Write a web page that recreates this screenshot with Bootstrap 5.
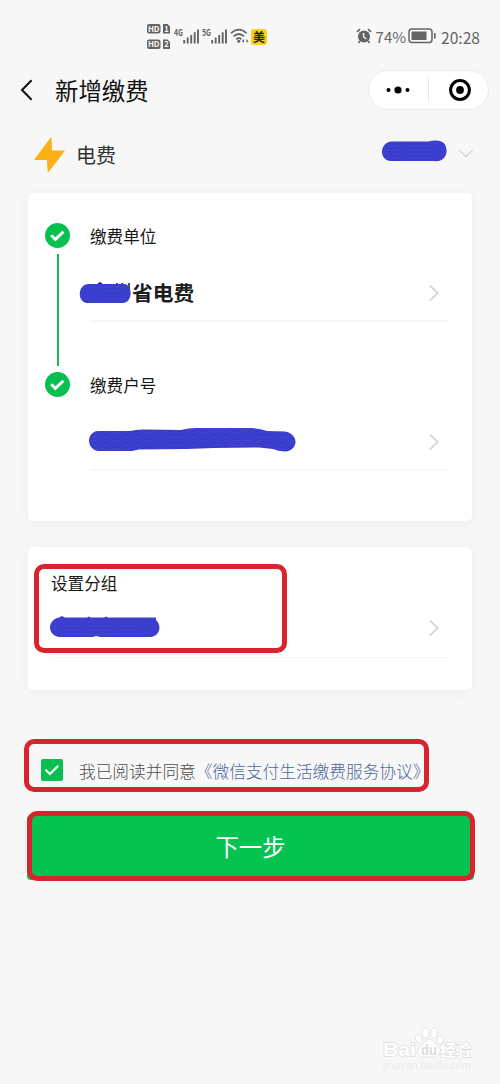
<!DOCTYPE html>
<html lang="zh-CN">
<head>
<meta charset="utf-8">
<meta name="viewport" content="width=device-width, initial-scale=1">
<title>新增缴费</title>
<link href="https://cdn.jsdelivr.net/npm/bootstrap@5.3.0/dist/css/bootstrap.min.css" rel="stylesheet">
<style>
body{background:#f7f7f7;font-family:"Noto Sans CJK SC",sans-serif;color:#111;width:500px;height:1084px;overflow:hidden}
svg{display:block;flex:none}
svg text{font-family:"Noto Sans CJK SC",sans-serif}
.status{height:60px;padding:12px 20px 0 147px;color:#646464}
.status .clock,.status .pct{font:400 15.6px/26px "Noto Sans CJK SC",sans-serif;color:#666}
.beauty{width:16px;height:16px;border-radius:3px;background:#fbd017;color:#222;font-size:12px;line-height:16px;font-weight:700;text-align:center}
.topbar{height:60px;padding:0 11px 0 20px}
.topbar h1{font-size:23.4px;line-height:34px;font-weight:400;color:#111}
.capsule{width:121px;height:40px;border:1px solid #ebebeb;border-radius:20px;background:#fff}
.capsule .bar{width:1px;height:24px;background:#e8e8e8}
.kind{height:73px;padding:0 26px 4px 34px}
.kind .name{font-size:20px;line-height:30px;color:#333}
.panel{margin:0 28px;background:#fff;border-radius:5px;box-shadow:0 2px 14px rgba(0,0,0,.045)}
.panel-steps{height:328px;padding:30px 24px 0 17px}
.step{height:149px;gap:20px}
.line{width:2px;height:112px;margin:6px 0;background:#21b25b}
.title{font-size:16.6px;line-height:25px;color:#181818}
.panel-steps .title{padding-top:1px;height:25px}
.value{height:58px;margin-top:16px;border-bottom:2px solid #f6f6f6;padding:2px 8px 0 0}
.value b{font-size:20.8px;line-height:30px;font-weight:700;color:#1c1c1c;padding-bottom:2px}
.panel-group{height:143px;margin-top:26px;padding:24px 24px 0 22px}
.panel-group .value{height:60px;margin-top:2px;border-bottom-width:1px;padding-top:0}
.markbox{position:absolute;border:5px solid #d8242f;border-radius:10px;pointer-events:none}
.agree{height:53px;margin:49px 71px 0 24px;border:5px solid #d8242f;border-radius:10px;padding:12px 0 0 12px;font-weight:300;white-space:nowrap}
.agree .txt{font-size:16.7px;line-height:24px;color:#4c4c4c}
.agree a.txt{color:#4c6a9c;text-decoration:none}
.next{height:65px;margin:23px 26px 0 27px;position:relative}
.next .btn{height:65px;border:0;border-radius:4px;background:#04c351;color:#fff;font-size:23.3px;line-height:34px;padding:0 0 3px}
.foot{margin-top:147px;padding-right:26px}
</style>
</head>
<body>
<svg width="0" height="0" class="position-absolute" aria-hidden="true">
  <defs>
    <pattern id="ink" width="11" height="4" patternUnits="userSpaceOnUse">
      <rect width="11" height="4" fill="#4145dc"/>
      <path d="M0 .8h7l4 .6M0 2.8l5 .4h6" stroke="#3032b4" stroke-width=".7" fill="none"/>
    </pattern>
    <symbol id="done" viewBox="0 0 25 25"><circle cx="12.5" cy="12.5" r="12.5" fill="#07c050"/><path d="M6.2 12.3l4.2 4.1 8-7.6" fill="none" stroke="#fff" stroke-width="2.9"/></symbol>
    <symbol id="next" viewBox="0 0 12 18"><path d="M1.8 1.5L9.8 9l-8 7.5" fill="none" stroke="#d6d6d6" stroke-width="1.800"/></symbol>
    <symbol id="bars" viewBox="0 0 16 15"><path d="M1.2 11v3.5M4.7 8.5v6M8.2 6v8.5M11.7 3.2v11.3M15 .5v14" stroke="#646464" stroke-width="1.9"/></symbol>
  </defs>
</svg>

<header class="status d-flex align-items-start">
  <svg width="24" height="27" viewBox="0 0 24 27" style="margin-top:11px">
    <g fill="#646464"><rect x="0" y="1" width="13.5" height="9.5" rx="2"/><rect x="0" y="16.5" width="13.5" height="9.5" rx="2"/><path d="M16 1h4.5l2.5 2.5v7h-7zM16 16.500h4.500l2.500 2.500v7h-7z"/></g>
    <g fill="#f7f7f7" font-size="8" font-weight="700"><text x="1" y="8.700" textLength="11.500">HD</text><text x="1" y="24.200" textLength="11.500">HD</text><text x="17.200" y="8.700" font-size="7.500">1</text><text x="17.200" y="24.200" font-size="7.500">2</text></g>
  </svg>
  <svg width="26" height="22" viewBox="0 0 26 22" style="margin:13px 0 0 3px"><text x="0" y="10.500" font-size="9" font-weight="700" fill="#646464" textLength="9" lengthAdjust="spacingAndGlyphs">4G</text><use href="#bars" x="9" y="4" width="16" height="15"/></svg>
  <svg width="26" height="22" viewBox="0 0 26 22" style="margin:13px 0 0 2px"><text x="0" y="10.500" font-size="9" font-weight="700" fill="#646464" textLength="9" lengthAdjust="spacingAndGlyphs">5G</text><use href="#bars" x="9" y="4" width="16" height="15"/></svg>
  <svg width="19" height="16" viewBox="0 0 19 16" style="margin:16px 0 0 2px"><g fill="none" stroke="#646464" stroke-width="1.800"><path d="M1 5.200Q8.800-2 16.600 5.200"/><path d="M3.600 8.300Q8.800 3.600 14 8.300"/><path d="M6.200 11.200Q8.800 9 11.400 11.200"/></g><circle cx="8.800" cy="13.300" r="1.500" fill="#646464"/><path d="M12 13l2-2v4zM18.500 13l-2-2v4z" fill="#646464"/></svg>
  <div class="beauty" style="margin:17px 0 0 2px">美</div>
  <svg width="16" height="16" viewBox="0 0 16 16" class="ms-auto" style="margin-top:16px"><circle cx="8" cy="8.500" r="6" fill="#646464"/><path d="M1 3.800L4 1.100M15 3.800L12 1.100M4 13l-1.500 2M12 13l1.500 2" stroke="#646464" stroke-width="1.700"/><path d="M7.600 5v4l2.800 2" stroke="#f7f7f7" stroke-width="1.400" fill="none"/></svg>
  <span class="pct" style="margin:12px 2px 0 4px;font-size:15px">74%</span>
  <svg width="28" height="16" viewBox="0 0 28 16" style="margin:16px 5px 0 0"><rect x="1" y="1" width="23" height="13.500" rx="3" fill="none" stroke="#646464" stroke-width="1.500"/><rect x="3.500" y="3.500" width="15" height="8.500" fill="#646464"/><path d="M26.800 5v5.500" stroke="#646464" stroke-width="1.700"/></svg>
  <span class="clock" style="margin-top:12px">20:28</span>
</header>

<nav class="topbar d-flex align-items-center">
  <svg width="13" height="22" viewBox="0 0 13 22"><path d="M11.600 1.300L2 11l9.600 9.700" fill="none" stroke="#111" stroke-width="2"/></svg>
  <h1 class="m-0" style="padding-left:22px">新增缴费</h1>
  <div class="capsule d-flex align-items-center ms-auto">
    <svg width="59" height="24" viewBox="0 0 59 24"><circle cx="19.500" cy="12" r="2"/><circle cx="29" cy="12" r="3.600"/><circle cx="38.500" cy="12" r="2"/></svg>
    <span class="bar"></span>
    <svg width="59" height="24" viewBox="0 0 59 24"><circle cx="31" cy="12" r="9.400" fill="none" stroke="#000" stroke-width="3"/><circle cx="31" cy="12" r="3.900"/></svg>
  </div>
</nav>

<div class="kind d-flex align-items-center">
  <svg width="31" height="36" viewBox="0 0 31 36"><path d="M17 .8L.8 22.500h12.700L14.200 35 30.200 14H17.500z" fill="#fbb116" stroke="#fbb116" stroke-linejoin="round"/></svg>
  <span class="name" style="padding:1px 0 0 11px">电费</span>
  <svg width="66" height="22" viewBox="0 0 66 22" class="ms-auto" style="margin-bottom:7px"><path d="M10 1.500H47Q60-1.500 64 4.500 68 13 62 19q-4 3-9 2H10C-2 21-2 3 10 1.500z" fill="url(#ink)"/></svg>
  <svg width="16" height="10" viewBox="0 0 16 10" style="margin-left:11px;margin-bottom:1px"><path d="M1.500 1.500L8 7.500l6.500-6" fill="none" stroke="#d4d4d4" stroke-width="1.500"/></svg>
</div>

<main>
  <section class="panel panel-steps">
    <div class="step d-flex">
      <div class="d-flex flex-column align-items-center"><svg width="25" height="25"><use href="#done"/></svg><span class="line"></span></div>
      <div class="flex-grow-1">
        <div class="title">缴费单位</div>
        <div class="value d-flex align-items-center">
          <svg width="53" height="24" viewBox="0 0 53 24" style="margin-left:-11px"><path d="M19 3l2-1 2 1M38 2v2M43 2v2M50 2v6" stroke="#333" stroke-width="1.700" fill="none"/><path d="M9 3H45C54 3 54 22 44 22H9C-2 22-2 4 9 3z" fill="url(#ink)"/></svg>
          <b>省电费</b>
          <svg width="12" height="18" class="ms-auto"><use href="#next"/></svg>
        </div>
      </div>
    </div>
    <div class="step d-flex">
      <div><svg width="25" height="25"><use href="#done"/></svg></div>
      <div class="flex-grow-1">
        <div class="title">缴费户号</div>
        <div class="value d-flex align-items-center">
          <svg width="208" height="26" viewBox="0 0 208 26" style="margin:0 0 4px -1px"><path d="M9 4H41Q48 2 57 2.500L92 3Q100 .8 108 1H163Q171 1.500 178 4L196 4.500C210 7 210 23 196 24.500Q189 24 184 22L170 20.500 125 21 98 22 50 22.500 43 24H9C-3 22-3 5 9 4z" fill="url(#ink)"/></svg>
          <svg width="12" height="18" class="ms-auto"><use href="#next"/></svg>
        </div>
      </div>
    </div>
  </section>

  <section class="panel panel-group position-relative">
    <div class="title" style="padding-left:1px">设置分组</div>
    <div class="value d-flex align-items-center">
      <svg width="110" height="22" viewBox="0 0 110 22" style="margin-bottom:2px"><path d="M9 1.500L12 0l3 1.500H37l2-1 2 1H54l2-1 2 1H106V4C112 9 110 20 101 21H50L46 20 43 21H9C-3 19-3 4 9 1.500z" fill="url(#ink)"/></svg>
      <svg width="12" height="18" class="ms-auto"><use href="#next"/></svg>
    </div>
    <div class="markbox" style="left:6px;top:17px;width:253px;height:89px"></div>
  </section>

  <div class="agree d-flex align-items-start">
    <svg width="22" height="22" viewBox="0 0 22 22" style="margin-top:3px"><rect width="22" height="22" rx="2" fill="#07c050"/><path d="M4.500 10.800l4.400 4.200 8.300-8.300" fill="none" stroke="#fff" stroke-width="2.200"/></svg>
    <span class="txt" style="margin:3px 0 0 16px">我已阅读并同意</span>
    <a href="#" class="txt" style="margin:3px 0 0">《微信支付生活缴费服务协议》</a>
  </div>

  <div class="next">
    <button type="button" class="btn w-100">下一步</button>
    <div class="markbox" style="left:0;top:-4px;width:448px;height:70px"></div>
  </div>
</main>

<footer class="foot d-flex justify-content-end">
  <svg width="92" height="50" viewBox="0 0 92 50">
    <g fill="#fff" stroke="#dedede" stroke-width=".8">
      <ellipse cx="37" cy="12" rx="3.300" ry="4.500" transform="rotate(-18 37 12)"/><ellipse cx="43.500" cy="6" rx="3.500" ry="5"/><ellipse cx="52" cy="6" rx="3.500" ry="5"/><ellipse cx="58" cy="13" rx="3.300" ry="4.500" transform="rotate(18 58 13)"/>
      <path d="M47 12q4 0 6.500 5 6 4 4.500 9-1.500 4-6 4H41q-6-1-5.500-5.500 0-3.500 5-7 3-5.500 6.500-5.500z"/>
      <g style="paint-order:stroke" font-weight="700" stroke-width="1.300"><text x="1" y="29" font-size="19" textLength="33" lengthAdjust="spacingAndGlyphs" style="font-family:'Liberation Sans',sans-serif">Bai</text><text x="58" y="29" font-size="15.500" textLength="31">经验</text></g>
    </g>
    <text x="39" y="27.500" font-size="15" font-weight="700" fill="#dcdcdc" textLength="16" lengthAdjust="spacingAndGlyphs" style="font-family:'Liberation Sans',sans-serif">du</text>
    <text x="1" y="42" font-size="10" fill="#ebebeb" textLength="88" lengthAdjust="spacingAndGlyphs" style="font-family:'Liberation Sans',sans-serif">jingyan.baidu.com</text>
  </svg>
</footer>
<script src="https://cdn.jsdelivr.net/npm/bootstrap@5.3.0/dist/js/bootstrap.bundle.min.js"></script>
</body>
</html>
